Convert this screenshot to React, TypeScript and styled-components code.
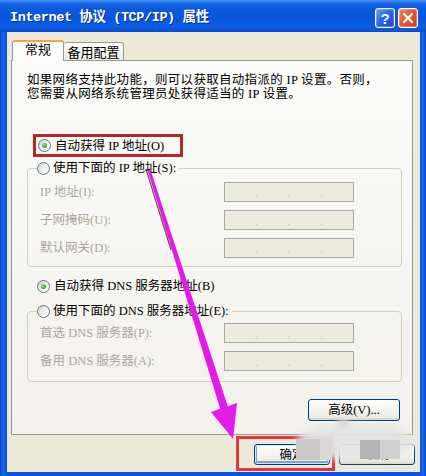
import React from "react";
import styled, { createGlobalStyle } from "styled-components";

const Global = createGlobalStyle`
  html, body { margin: 0; padding: 0; background: #ffffff; }
  body { width: 426px; height: 476px; overflow: hidden; font-family: "Liberation Serif", "Noto Sans CJK SC", serif; }
`;

const UI_FONT = `"Liberation Serif", "Noto Sans CJK SC", serif`;

const Window = styled.div`
  position: relative;
  width: 426px;
  height: 476px;
  box-sizing: border-box;
  display: flex;
  flex-direction: column;
  background: linear-gradient(to right, #0846D0 0px, #1F66E8 3px, #0A55DF 6px, #0A55DF 420px, #1F66E8 423px, #0640C4 426px);
`;

const TitleBar = styled.div`
  flex: none;
  height: 32px;
  box-sizing: border-box;
  padding: 4px 8px 0 10px;
  display: flex;
  align-items: center;
  background: linear-gradient(to bottom, #4A95F5 0px, #1C6BEB 3px, #0A5ADF 8px, #0756DD 18px, #0A5FE6 27px, #0850D6 31px, #0645C8 32px);
`;

const Title = styled.div`
  flex: 1;
  color: #ffffff;
  font-family: "Liberation Mono", "Noto Sans CJK SC", monospace;
  font-weight: bold;
  font-size: 13.5px;
  letter-spacing: -0.4px;
  line-height: 18px;
  white-space: pre;
  text-shadow: 1px 1px 0 #0A2A8C;
`;

const CaptionButtons = styled.div`
  display: flex;
  gap: 3px;
`;

const CaptionButton = styled.div<{ $kind: "help" | "close" }>`
  width: 20px;
  height: 20px;
  box-sizing: border-box;
  border: 1px solid #ffffff;
  border-radius: 3px;
  display: flex;
  align-items: center;
  justify-content: center;
  color: #ffffff;
  font-family: "Liberation Sans", sans-serif;
  font-weight: bold;
  font-size: 15px;
  background: ${(p) =>
    p.$kind === "close"
      ? "linear-gradient(135deg, #F0896A 0%, #E25B33 45%, #C8401D 100%)"
      : "linear-gradient(135deg, #6FA0F8 0%, #2A68E8 45%, #1848C8 100%)"};
  box-shadow: inset 0 0 0 1px rgba(255, 255, 255, 0.25);
`;

const Client = styled.div`
  flex: 1;
  margin: 0 6px 4px 7px;
  padding: 8px 5px 0 4px;
  background: #ECE9D8;
  display: flex;
  flex-direction: column;
`;

const TabStrip = styled.div`
  height: 20px;
  display: flex;
  align-items: flex-end;
  margin-left: 1px;
`;

const Tab = styled.div<{ $active?: boolean; $width: number }>`
  position: relative;
  z-index: ${(p) => (p.$active ? 2 : 1)};
  width: ${(p) => p.$width}px;
  height: ${(p) => (p.$active ? 21 : 18)}px;
  margin-bottom: ${(p) => (p.$active ? -1 : 0)}px;
  box-sizing: border-box;
  border: 1px solid #919B9C;
  border-bottom: none;
  ${(p) => (p.$active ? "border-top: 2px solid #F2A93B;" : "border-left: none;")}
  border-radius: 3px 3px 0 0;
  background: ${(p) => (p.$active ? "#FCFCFB" : "linear-gradient(#FFFFFF, #ECEBE5)")};
  display: flex;
  justify-content: center;
  align-items: flex-start;
  padding-top: ${(p) => (p.$active ? 0 : 2)}px;
  font-family: ${UI_FONT};
  font-size: 13px;
  line-height: 16px;
  color: #000000;
`;

const Panel = styled.div`
  position: relative;
  z-index: 1;
  height: 375px;
  box-sizing: border-box;
  margin-right: 2px;
  border: 1px solid #919B9C;
  background: linear-gradient(#FBFBF9, #F2F1EB);
  padding: 12px 10px 0 15px;
  display: flex;
  flex-direction: column;
  align-items: stretch;
`;

const Description = styled.p`
  margin: 0;
  font-family: ${UI_FONT};
  font-size: 12.5px;
  letter-spacing: 0.3px;
  line-height: 14px;
  color: #000000;
  white-space: pre;
`;

const Annotated = styled.div<{ $color: string; $width?: number }>`
  box-sizing: border-box;
  border: 3px solid ${(p) => p.$color};
  ${(p) => (p.$width ? `width: ${p.$width}px;` : "")}
  display: flex;
  align-items: center;
`;

const AnnotatedRow = styled(Annotated)`
  margin: 33px 0 0 6px;
  height: 23px;
  padding-left: 2px;
`;

const RadioRow = styled.div<{ $indent?: number; $top?: number }>`
  display: flex;
  align-items: center;
  gap: 4px;
  height: 16px;
  margin-left: ${(p) => p.$indent ?? 0}px;
  margin-top: ${(p) => p.$top ?? 0}px;
`;

const Radio = styled.span<{ $checked?: boolean }>`
  flex: none;
  width: 13px;
  height: 13px;
  box-sizing: border-box;
  border-radius: 50%;
  border: 1px solid #5D7690;
  background: linear-gradient(135deg, #D6D6CE 0%, #F1F1EC 55%, #FFFFFF 100%);
  display: flex;
  align-items: center;
  justify-content: center;
  &::after {
    content: "";
    width: 5px;
    height: 5px;
    border-radius: 50%;
    background: ${(p) => (p.$checked ? "radial-gradient(circle at 40% 35%, #9BE39B 0%, #3FA83F 60%, #2B7F2B 100%)" : "transparent")};
  }
`;

const Label = styled.span<{ $disabled?: boolean }>`
  font-family: ${UI_FONT};
  font-size: 12.5px;
  line-height: 16px;
  white-space: pre;
  color: ${(p) => (p.$disabled ? "#ACA899" : "#000000")};
`;

const Group = styled.fieldset<{ $top: number; $bottom: number }>`
  margin: ${(p) => p.$top}px 0 0 0;
  padding: 0 0 ${(p) => p.$bottom}px 12px;
  border: 1px solid #D0D0BF;
  border-radius: 4px;
  min-width: 0;
`;

const Legend = styled.legend`
  margin-left: -3px;
  padding: 0 3px 0 0;
  display: flex;
  align-items: center;
  gap: 3px;
  height: 16px;
`;

const FieldGrid = styled.div<{ $top: number }>`
  margin-top: ${(p) => p.$top}px;
  display: grid;
  grid-template-columns: 184px 130px;
  grid-auto-rows: 20px;
  row-gap: 8px;
  align-items: center;
`;

const IpBox = styled.div`
  height: 20px;
  box-sizing: border-box;
  border: 1px solid #A3A9A6;
  background: #EDEBDD;
  display: flex;
  align-items: center;
  span { flex: 1; }
  i {
    font-style: normal;
    font-family: "Liberation Sans", sans-serif;
    font-size: 11px;
    color: #C2BFB0;
    line-height: 11px;
    padding-top: 3px;
  }
`;

const PanelFooter = styled.div`
  display: flex;
  justify-content: flex-end;
  margin: 17px 2px 0 0;
`;

const Button = styled.div<{ $default?: boolean; $width?: number }>`
  width: ${(p) => p.$width ?? 76}px;
  height: ${(p) => (p.$default !== undefined ? 21 : 22)}px;
  box-sizing: border-box;
  border: 1px solid #003C74;
  border-radius: 3px;
  background: linear-gradient(#FFFFFF 0%, #F4F3EE 50%, #ECEBE6 85%, #D6D0C5 100%);
  box-shadow: ${(p) => (p.$default ? "inset 0 0 0 1px #CEE7FF, inset 0 -1px 0 2px #7DA2CE" : "none")};
  display: flex;
  align-items: center;
  justify-content: center;
  font-family: ${UI_FONT};
  font-size: 12.5px;
  line-height: 16px;
  color: #000000;
  white-space: pre;
`;

const Footer = styled.div`
  display: flex;
  justify-content: flex-end;
  align-items: flex-start;
  gap: 4px;
  padding-top: 1px;
`;

const AnnotatedButton = styled(Annotated)`
  padding: 5px 2px 3px 15px;
`;

const CancelSlot = styled.div`
  margin-top: 8px;
`;

const ArrowLayer = styled.svg`
  position: absolute;
  left: 0;
  top: 0;
  z-index: 5;
  pointer-events: none;
`;

const Watermark = styled.div`
  position: absolute;
  inset: 0;
  z-index: 4;
  pointer-events: none;
`;

const Blob = styled.div<{ $x: number; $y: number; $w: number; $h: number; $c: string; $blur?: number; $round?: boolean }>`
  position: absolute;
  left: ${(p) => p.$x}px;
  top: ${(p) => p.$y}px;
  width: ${(p) => p.$w}px;
  height: ${(p) => p.$h}px;
  background: ${(p) => p.$c};
  border-radius: ${(p) => (p.$round ? "50%" : "0")};
  filter: blur(${(p) => p.$blur ?? 0}px);
`;

const Ip = () => (
  <IpBox>
    <span />
    <i>.</i>
    <span />
    <i>.</i>
    <span />
    <i>.</i>
    <span />
  </IpBox>
);

export default function App() {
  return (
    <>
      <Global />
      <Window>
        <TitleBar>
          <Title>Internet 协议 (TCP/IP) 属性</Title>
          <CaptionButtons>
            <CaptionButton $kind="help">?</CaptionButton>
            <CaptionButton $kind="close">
              <svg width="12" height="12" viewBox="0 0 12 12">
                <path d="M2 2 L10 10 M10 2 L2 10" stroke="#ffffff" strokeWidth="2.2" strokeLinecap="round" />
              </svg>
            </CaptionButton>
          </CaptionButtons>
        </TitleBar>
        <Client>
          <TabStrip>
            <Tab $active $width={52}>常规</Tab>
            <Tab $width={60}>备用配置</Tab>
          </TabStrip>
          <Panel>
            <Description>
              {"如果网络支持此功能，则可以获取自动指派的 IP 设置。否则，\n您需要从网络系统管理员处获得适当的 IP 设置。"}
            </Description>
            <AnnotatedRow $color="#B8262C" $width={150}>
              <RadioRow>
                <Radio $checked />
                <Label>自动获得 IP 地址(O)</Label>
              </RadioRow>
            </AnnotatedRow>
            <Group $top={3} $bottom={8}>
              <Legend>
                <Radio />
                <Label>使用下面的 IP 地址(S):</Label>
              </Legend>
              <FieldGrid $top={6}>
                <Label $disabled>IP 地址(I):</Label>
                <Ip />
                <Label $disabled>子网掩码(U):</Label>
                <Ip />
                <Label $disabled>默认网关(D):</Label>
                <Ip />
              </FieldGrid>
            </Group>
            <RadioRow $indent={10} $top={11}>
              <Radio $checked />
              <Label>自动获得 DNS 服务器地址(B)</Label>
            </RadioRow>
            <Group $top={9} $bottom={10}>
              <Legend>
                <Radio />
                <Label>使用下面的 DNS 服务器地址(E):</Label>
              </Legend>
              <FieldGrid $top={4}>
                <Label $disabled>首选 DNS 服务器(P):</Label>
                <Ip />
                <Label $disabled>备用 DNS 服务器(A):</Label>
                <Ip />
              </FieldGrid>
            </Group>
            <PanelFooter>
              <Button $width={92}>高级(V)...</Button>
            </PanelFooter>
          </Panel>
          <Footer>
            <AnnotatedButton $color="#E8353B">
              <Button $default>确定</Button>
            </AnnotatedButton>
            <CancelSlot>
              <Button $default={false}>取消</Button>
            </CancelSlot>
          </Footer>
        </Client>
        <Watermark>
          <Blob $x={296} $y={424} $w={120} $h={36} $c="rgba(228,228,228,0.95)" $blur={3} $round />
          <Blob $x={336} $y={419} $w={14} $h={8} $c="rgba(215,215,215,0.9)" $blur={2} $round />
          <Blob $x={296} $y={439} $w={24} $h={21} $c="#C9C9C9" />
          <Blob $x={320} $y={439} $w={12} $h={21} $c="#D8D8D8" />
          <Blob $x={360} $y={440} $w={20} $h={19} $c="#B4B4B4" />
          <Blob $x={380} $y={440} $w={20} $h={19} $c="#D0D0D0" />
        </Watermark>
        <ArrowLayer width="426" height="476" viewBox="0 0 426 476">
          <path d="M146 169 L171 250" stroke="#5B2A2A" strokeWidth="1.2" opacity="0.85" />
          <polygon points="147.5,170 150.5,170 229,410 220.5,410" fill="#E31BE8" />
          <polygon points="211,412 237,403 233,439" fill="#E31BE8" />
        </ArrowLayer>
      </Window>
    </>
  );
}
